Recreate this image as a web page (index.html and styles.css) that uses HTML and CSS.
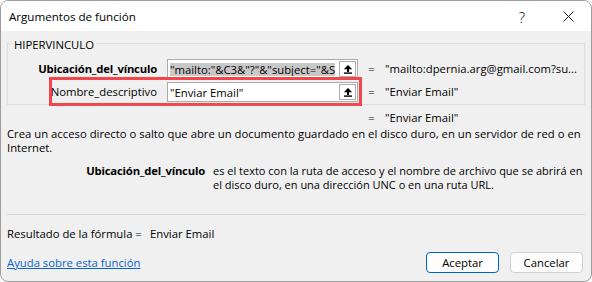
FILE: index.html
```html
<!DOCTYPE html>
<html lang="es">
<head>
<meta charset="utf-8">
<title>Argumentos de función</title>
<link rel="stylesheet" href="styles.css">
</head>
<body>
<div class="dialog">
  <header class="titlebar">
    <span class="title">Argumentos de función</span>
    <span class="caption-btn help">?</span>
    <span class="caption-btn close">
      <svg width="11" height="11" viewBox="0 0 11 11"><path d="M0.5 0.5 L10.5 10.5 M10.5 0.5 L0.5 10.5" stroke="#1a1a1a" stroke-width="1" fill="none"/></svg>
    </span>
  </header>
  <main class="content">
    <fieldset class="group">
      <legend>HIPERVINCULO</legend>
      <div class="arg-row">
        <span class="arg-label bold">Ubicación_del_vínculo</span>
        <div class="field">
          <span class="field-text"><span class="sel">"mailto:"&amp;C3&amp;"?"&amp;"subject="&amp;S</span></span>
          <span class="ref-btn"><svg width="10" height="10" viewBox="0 0 10 10"><path d="M0.8 5.2 L5 1 L9.2 5.2 Z" fill="#000"/><rect x="4" y="4.5" width="2" height="3.5" fill="#000"/><rect x="1" y="8.4" width="8" height="1.4" fill="#000"/></svg></span>
        </div>
        <span class="eq">=</span>
        <span class="val">"mailto:dpernia.arg@gmail.com?su...</span>
      </div>
      <div class="arg-row">
        <span class="arg-label">Nombre_descriptivo</span>
        <div class="field">
          <span class="field-text">"Enviar Email"</span>
          <span class="ref-btn"><svg width="10" height="10" viewBox="0 0 10 10"><path d="M0.8 5.2 L5 1 L9.2 5.2 Z" fill="#000"/><rect x="4" y="4.5" width="2" height="3.5" fill="#000"/><rect x="1" y="8.4" width="8" height="1.4" fill="#000"/></svg></span>
        </div>
        <span class="eq">=</span>
        <span class="val">"Enviar Email"</span>
      </div>
    </fieldset>
    <div class="arg-row result-row">
      <span></span>
      <span></span>
      <span class="eq">=</span>
      <span class="val">"Enviar Email"</span>
    </div>
    <p class="desc">Crea un acceso directo o salto que abre un documento guardado en el disco duro, en un servidor de red o en<br>Internet.</p>
    <div class="param">
      <span class="param-name bold">Ubicación_del_vínculo</span>
      <span class="param-text">es el texto con la ruta de acceso y el nombre de archivo que se abrirá en<br>el disco duro, en una dirección UNC o en una ruta URL.</span>
    </div>
    <div class="sep"></div>
    <div class="result">
      <span class="result-label">Resultado de la fórmula =</span>
      <span>Enviar Email</span>
    </div>
    <footer class="footer">
      <a class="link" href="#">Ayuda sobre esta función</a>
      <button class="btn primary">Aceptar</button>
      <button class="btn">Cancelar</button>
    </footer>
    <div class="mark"></div>
  </main>
</div>
</body>
</html>
```
FILE: styles.css
```css
* { box-sizing: border-box; }

body {
  margin: 0;
  background: #fafafa;
  font-family: "Open Sans", "Noto Sans", sans-serif;
  font-size: 11.3px;
  line-height: 14px;
  color: #000;
}

.dialog {
  width: 592px;
  height: 282px;
  border: 1px solid #9d9d9d;
  border-radius: 8px;
  overflow: hidden;
  display: flex;
  flex-direction: column;
  background: #f0f0f0;
}

.titlebar {
  flex: none;
  height: 30px;
  background: #fff;
  display: flex;
  align-items: center;
}

.title {
  flex: 1;
  padding-left: 8px;
  font-size: 11.6px;
  padding-top: 1px;
}

.caption-btn {
  width: 46px;
  height: 30px;
  display: flex;
  align-items: center;
  justify-content: center;
}

.help {
  font-size: 15px;
  font-weight: 300;
  padding-top: 2px;
}

.content {
  flex: 1;
  position: relative;
  display: flex;
  flex-direction: column;
}

.group {
  margin: 3px 6px 0 6px;
  padding: 7px 0 2px;
  border: 1px solid #dcdcdc;
  min-width: 0;
}

.group legend {
  margin-left: 4px;
  padding: 4px 2px 0;
  line-height: 14px;
}

.arg-row {
  display: grid;
  grid-template-columns: 149px 191px 7px 1fr;
  column-gap: 10px;
  align-items: center;
  height: 20px;
}

.arg-row + .arg-row { margin-top: 3px; }

.arg-label {
  text-align: right;
  white-space: nowrap;
}

.bold {
  font-weight: 700;
  letter-spacing: -0.2px;
}

.field {
  height: 20px;
  border: 1px solid #ababab;
  background: #fff;
  display: flex;
  align-items: center;
  padding: 0 1px 0 2px;
  min-width: 0;
  overflow: hidden;
}

.field-text {
  flex: 1;
  min-width: 0;
  overflow: hidden;
  white-space: nowrap;
  line-height: 13px;
}

.sel { background: #c8c8c8; }

.ref-btn {
  flex: none;
  width: 17px;
  height: 16px;
  border: 1px solid #adadad;
  background: #fff;
  display: flex;
  align-items: center;
  justify-content: center;
}

.eq { text-align: center; }

.val {
  white-space: nowrap;
  overflow: hidden;
}

.result-row {
  height: 14px;
  margin: 6px 0 0 7px;
}

.desc {
  margin: 2px 0 0 6px;
  white-space: nowrap;
}

.param {
  margin-top: 9px;
  display: grid;
  grid-template-columns: 204px 1fr;
  column-gap: 8px;
}

.param-name { text-align: right; }

.param-text {
  white-space: nowrap;
  font-size: 11px;
}

.sep {
  margin: 22px 6px 0;
  border-top: 1px solid #d9d9d9;
}

.result {
  margin: 12px 0 0 6px;
  display: flex;
}

.result-label { width: 143px; }

.footer {
  margin-top: 11px;
  display: flex;
  align-items: center;
  padding: 0 8px 0 6px;
}

.link {
  flex: 1;
  color: #0b63ce;
  text-decoration: underline;
}

.btn {
  width: 73px;
  height: 21px;
  margin-left: 11px;
  border: 1px solid #d0d0d0;
  border-radius: 4px;
  background: #fdfdfd;
  font: inherit;
  color: #000;
  padding: 0;
}

.btn.primary { border-color: #0067c0; }

.mark {
  position: absolute;
  left: 48px;
  top: 46px;
  width: 313px;
  height: 29px;
  border: 3px solid #f2464b;
  pointer-events: none;
}
```
